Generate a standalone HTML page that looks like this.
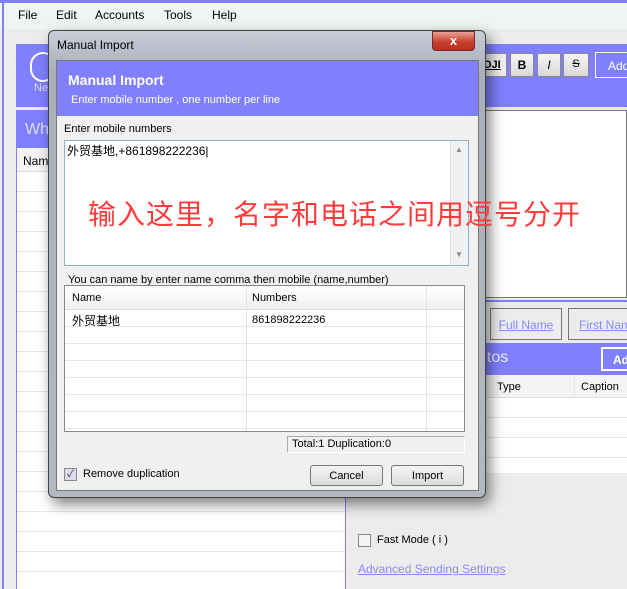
<!DOCTYPE html>
<html><head><meta charset="utf-8"><style>
*{box-sizing:border-box;margin:0;padding:0}
body{width:627px;height:589px;overflow:hidden;background:#ececec;font-family:"Liberation Sans","Noto Sans CJK SC",sans-serif;font-size:12px;color:#000;position:relative}
.a{position:absolute;white-space:nowrap}
</style></head><body>
<div class="a" style="left:0;top:0;width:627px;height:3px;background:#8080ff"></div>
<div class="a" style="left:0;top:3px;width:627px;height:26px;background:#eef5f3"></div>
<div class="a" style="left:2px;top:3px;width:2px;height:586px;background:#8080ff"></div>
<div class="a" style="left:18px;top:8px">File</div>
<div class="a" style="left:56px;top:8px">Edit</div>
<div class="a" style="left:95px;top:8px">Accounts</div>
<div class="a" style="left:164px;top:8px">Tools</div>
<div class="a" style="left:212px;top:8px">Help</div>
<div class="a" style="left:16px;top:44px;width:611px;height:63px;background:#8080ff"></div>
<div class="a" style="left:30px;top:52px;width:26px;height:30px;border:2px solid #fff;border-radius:13px"></div>
<div class="a" style="left:34px;top:82px;color:#dde;font-size:11px">Ne</div>
<div class="a" style="left:482px;top:53px;width:25px;height:24px;background:#eee;border:1px solid #888;font-weight:bold;text-decoration:underline;font-size:11px;padding-top:5px">OJI</div>
<div class="a" style="left:510px;top:53px;width:24px;height:24px;background:linear-gradient(#f6f6f6,#d8d8d8);border:1px solid #888;border-radius:2px;font-weight:bold;text-align:center;padding-top:4px">B</div>
<div class="a" style="left:537px;top:53px;width:24px;height:24px;background:linear-gradient(#f6f6f6,#d8d8d8);border:1px solid #888;border-radius:2px;font-style:italic;text-align:center;padding-top:4px">I</div>
<div class="a" style="left:563px;top:53px;width:26px;height:24px;background:linear-gradient(#f6f6f6,#d8d8d8);border:1px solid #888;border-radius:2px;text-decoration:line-through;text-align:center;padding-top:4px;font-size:11px">S</div>
<div class="a" style="left:595px;top:52px;width:40px;height:26px;border:1px solid #fff;color:#fff;padding:6px 0 0 12px">Add</div>
<div class="a" style="left:16px;top:110px;width:330px;height:479px;background:#fff;border:1px solid #8080ff"></div>
<div class="a" style="left:17px;top:111px;width:328px;height:37px;background:#8080ff;color:#ddf;font-size:16px;padding:10px 0 0 8px">Wh</div>
<div class="a" style="left:17px;top:148px;width:328px;height:24px;background:#f4f4f4;border-bottom:1px solid #ddd;padding:6px 0 0 6px">Name</div>
<div class="a" style="left:17px;top:172px;width:328px;height:417px;background:repeating-linear-gradient(#fff 0 19px,#e6e6e6 19px 20px)"></div>
<div class="a" style="left:350px;top:110px;width:277px;height:188px;background:#fff;border:1px solid #777"></div>
<div class="a" style="left:350px;top:300px;width:277px;height:2px;background:#8080ff"></div>
<div class="a" style="left:490px;top:308px;width:72px;height:32px;border:1px solid #777;color:#88f;text-decoration:underline;text-align:center;padding-top:9px">Full Name</div>
<div class="a" style="left:568px;top:308px;width:70px;height:32px;border:1px solid #777;color:#88f;text-decoration:underline;padding:9px 0 0 10px;overflow:hidden">First Name</div>
<div class="a" style="left:350px;top:343px;width:277px;height:32px;background:#8080ff;color:#eef;font-size:16px;padding:6px 0 0 128px">otos</div>
<div class="a" style="left:601px;top:347px;width:40px;height:24px;border:2px solid #fff;color:#fff;font-weight:bold;padding:4px 0 0 10px">Add</div>
<div class="a" style="left:350px;top:375px;width:277px;height:98px;background:#fff;border-bottom:1px solid #8080ff"></div>
<div class="a" style="left:350px;top:375px;width:277px;height:23px;background:#f4f4f4;border-bottom:1px solid #ddd"></div>
<div class="a" style="left:497px;top:381px;font-size:11px">Type</div>
<div class="a" style="left:581px;top:381px;font-size:11px">Caption</div>
<div class="a" style="left:574px;top:375px;width:1px;height:98px;background:#e4e4e4"></div>
<div class="a" style="left:350px;top:398px;width:277px;height:75px;background:repeating-linear-gradient(#fff 0 19px,#e6e6e6 19px 20px)"></div>
<div class="a" style="left:358px;top:534px;width:13px;height:13px;border:1px solid #888;background:#f4f4f4"></div>
<div class="a" style="left:377px;top:534px;font-size:11px">Fast Mode ( i )</div>
<div class="a" style="left:358px;top:562px;font-size:12px;color:#88f;text-decoration:underline">Advanced Sending Settings</div>
<div class="a" style="left:48px;top:30px;width:438px;height:468px;border:1px solid #444;border-radius:6px;background:linear-gradient(#c8cdd8,#a9afbb 40px,#b4b8c0);box-shadow:4px 6px 14px rgba(0,0,0,.5)"></div>
<div class="a" style="left:57px;top:38px;font-size:12px">Manual Import</div>
<div class="a" style="left:432px;top:31px;width:43px;height:20px;border:1px solid #7a2a20;border-radius:0 0 4px 4px;background:linear-gradient(#e8a090,#c84030 55%,#b83020);color:#fff;font-weight:bold;text-align:center;font-size:13px;line-height:17px">x</div>
<div class="a" style="left:56px;top:60px;width:423px;height:431px;background:#f0f0f0;border:1px solid #777"></div>
<div class="a" style="left:57px;top:61px;width:421px;height:55px;background:#8080ff"></div>
<div class="a" style="left:68px;top:72px;color:#fff;font-weight:bold;font-size:14px">Manual Import</div>
<div class="a" style="left:71px;top:94px;color:#fff;font-size:11px">Enter mobile number , one number per line</div>
<div class="a" style="left:64px;top:123px;font-size:11px">Enter mobile numbers</div>
<div class="a" style="left:64px;top:140px;width:405px;height:126px;background:#fff;border:1px solid #8ab2d0"></div>
<div class="a" style="left:450px;top:141px;width:18px;height:124px;background:#f0f0f0;border-left:1px solid #e0e0e0"></div>
<div class="a" style="left:455px;top:145px;font-size:8px;color:#888">▲</div>
<div class="a" style="left:455px;top:250px;font-size:8px;color:#888">▼</div>
<div class="a" style="left:67px;top:142px;font-size:12px">外贸基地,+861898222236|</div>
<div class="a" style="left:68px;top:274px;font-size:11px">You can name by enter name comma then mobile (name,number)</div>
<div class="a" style="left:64px;top:285px;width:401px;height:147px;background:#fff;border:1px solid #888"></div>
<div class="a" style="left:65px;top:286px;width:399px;height:24px;background:linear-gradient(#fff,#f0f0f2);border-bottom:1px solid #ddd"></div>
<div class="a" style="left:72px;top:292px;font-size:11px">Name</div>
<div class="a" style="left:252px;top:292px;font-size:11px">Numbers</div>
<div class="a" style="left:65px;top:310px;width:399px;height:121px;background:repeating-linear-gradient(#fff 0 16px,#e8e8e8 16px 17px)"></div>
<div class="a" style="left:246px;top:286px;width:1px;height:145px;background:#e4e4e4"></div>
<div class="a" style="left:426px;top:286px;width:1px;height:145px;background:#e4e4e4"></div>
<div class="a" style="left:72px;top:312px;font-size:12px">外贸基地</div>
<div class="a" style="left:252px;top:314px;font-size:11px">861898222236</div>
<div class="a" style="left:287px;top:436px;width:178px;height:17px;border:1px solid #aaa;border-right-color:#fff;border-bottom-color:#fff;font-size:11px;padding:1px 0 0 4px">Total:1 Duplication:0</div>
<div class="a" style="left:64px;top:468px;width:13px;height:13px;border:1px solid #888;background:#dde;color:#335;font-size:10px;line-height:11px;text-align:center">✓</div>
<div class="a" style="left:83px;top:468px;font-size:11px">Remove duplication</div>
<div class="a" style="left:310px;top:465px;width:73px;height:21px;border:1px solid #777;border-radius:3px;background:linear-gradient(#f4f4f4,#dcdcdc);text-align:center;font-size:11px;padding-top:4px">Cancel</div>
<div class="a" style="left:391px;top:465px;width:73px;height:21px;border:1px solid #777;border-radius:3px;background:linear-gradient(#f4f4f4,#dcdcdc);text-align:center;font-size:11px;padding-top:4px">Import</div>
<div class="a" style="left:88px;top:197px;font-size:28px;letter-spacing:1px;color:#ff3b3b;font-family:'Noto Sans CJK SC',sans-serif;line-height:32px">输入这里，名字和电话之间用逗号分开</div>
</body></html>
